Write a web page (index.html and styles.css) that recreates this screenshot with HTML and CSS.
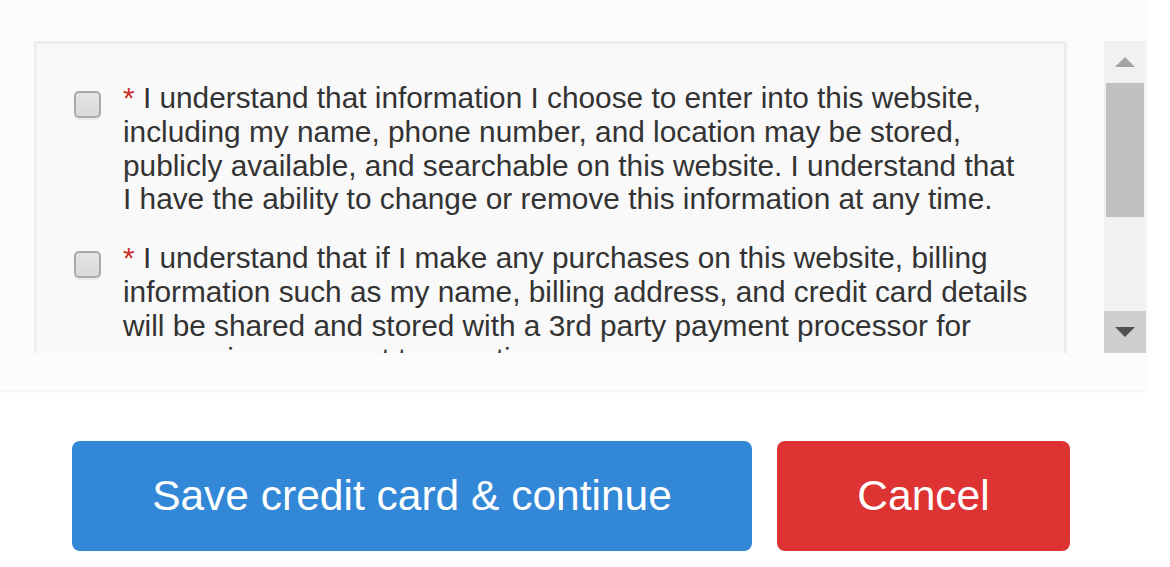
FILE: index.html
```html
<!DOCTYPE html>
<html lang="en">
<head>
<meta charset="utf-8">
<title>Terms</title>
<link rel="stylesheet" href="styles.css">
</head>
<body>
<div class="panel">
  <div class="scroller">
    <div class="viewport">
      <div class="terms">
        <div class="term">
          <span class="cb"></span>
          <p class="term-text"><span class="req">*</span> I understand that information I choose to enter into this website, including my name, phone number, and location may be stored, publicly available, and searchable on this website. I understand that I have the ability to change or remove this information at any time.</p>
        </div>
        <div class="term">
          <span class="cb"></span>
          <p class="term-text"><span class="req">*</span> I understand that if I make any purchases on this website, billing information such as my name, billing address, and credit card details will be shared and stored with a 3rd party payment processor for processing payment transactions.</p>
        </div>
      </div>
    </div>
    <div class="scrollbar">
      <div class="sb-btn"><span class="tri-up"></span></div>
      <div class="sb-track"><div class="sb-thumb"></div></div>
      <div class="sb-btn sb-btn-active"><span class="tri-down"></span></div>
    </div>
  </div>
</div>
<div class="actions">
  <button class="btn btn-primary">Save credit card &amp; continue</button>
  <button class="btn btn-danger">Cancel</button>
</div>
</body>
</html>
```
FILE: styles.css
```css
html, body {
  margin: 0;
  background: #ffffff;
  font-family: "Liberation Sans", Arial, sans-serif;
}

.panel {
  width: 1146px;
  height: 390px;
  box-sizing: border-box;
  padding: 41px 0 37px 34px;
  background: #fcfcfc;
  box-shadow: 0 1px 3px rgba(0, 0, 0, 0.08);
}

.scroller {
  display: flex;
  height: 312px;
}

.viewport {
  flex: 1;
  overflow: hidden;
  padding-right: 37px;
}

.terms {
  border: 3px solid #eeeeee;
  background: #f9f9f9;
  padding: 37px 36px 30px 37px;
}

.term {
  display: flex;
  align-items: flex-start;
  gap: 22px;
}

.term + .term {
  margin-top: 25px;
}

.cb {
  flex: none;
  width: 27px;
  height: 27px;
  box-sizing: border-box;
  margin-top: 10px;
  border: 2px solid #a9a9a9;
  border-radius: 5px;
  background: linear-gradient(#e4e4e4, #d9d9d9);
  box-shadow: 0 2px 1px rgba(0, 0, 0, 0.06);
}

.term-text {
  margin: 0;
  font-size: 29.8px;
  line-height: 33.75px;
  color: #333333;
}

.req {
  color: #c9302c;
}

.scrollbar {
  flex: none;
  width: 42px;
  display: flex;
  flex-direction: column;
  background: #f1f1f1;
}

.sb-btn {
  height: 42px;
  flex: none;
  display: flex;
  align-items: center;
  justify-content: center;
}

.sb-btn-active {
  background: #cfcfcf;
}

.tri-up {
  width: 0;
  height: 0;
  border-left: 10px solid transparent;
  border-right: 10px solid transparent;
  border-bottom: 10px solid #a3a3a3;
}

.tri-down {
  width: 0;
  height: 0;
  border-left: 10px solid transparent;
  border-right: 10px solid transparent;
  border-top: 10px solid #505050;
}

.sb-track {
  flex: 1;
}

.sb-thumb {
  height: 134px;
  margin: 0 2px;
  background: #c1c1c1;
}

.actions {
  display: flex;
  gap: 25px;
  margin-top: 51px;
  padding-left: 72px;
}

.btn {
  height: 110px;
  border: 0;
  border-radius: 8px;
  color: #ffffff;
  font-family: "Liberation Sans", Arial, sans-serif;
  font-size: 42.5px;
  padding: 0;
}

.btn-primary {
  width: 680px;
  background: #3287d7;
}

.btn-danger {
  width: 293px;
  background: #dd3333;
}
```
